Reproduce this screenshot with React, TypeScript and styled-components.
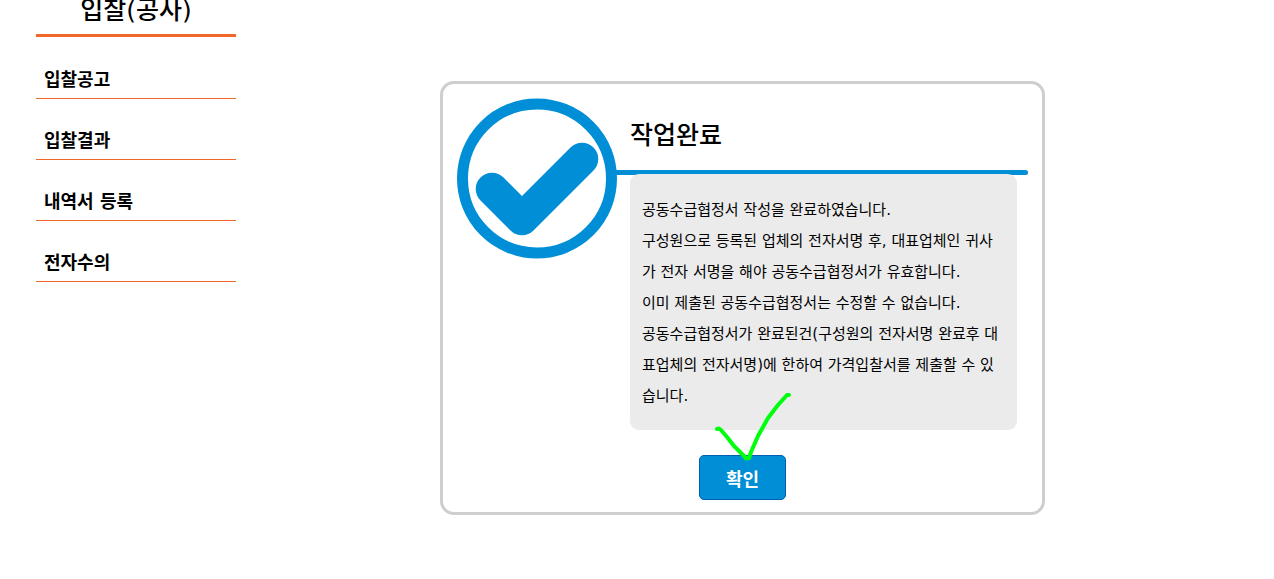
import React from "react";
import styled, { createGlobalStyle } from "styled-components";

const GlobalStyle = createGlobalStyle`
  * { box-sizing: border-box; }
  body {
    margin: 0;
    background: #fff;
    color: #000;
    font-family: "DejaVu Sans", "Noto Sans CJK KR", sans-serif;
  }
`;

const Page = styled.div`
  display: flex;
  align-items: flex-start;
  padding: 0 25px 0 36px;
`;

const Sidebar = styled.aside`
  flex: 0 0 200px;
`;

const SidebarTitle = styled.h1`
  margin: 0 0 1px;
  padding-bottom: 12px;
  border-bottom: 3px solid #f26829;
  font-size: 25px;
  font-weight: 500;
  line-height: 22px;
  text-align: center;
`;

const MenuLink = styled.a`
  display: block;
  padding: 29px 8px 5px;
  border-bottom: 1px solid #f26829;
  color: #000;
  font-size: 18px;
  font-weight: 700;
  line-height: 26px;
  text-decoration: none;
`;

const Main = styled.main`
  flex: 1;
  min-width: 0;
  display: flex;
  justify-content: center;
  padding: 81px 0 64px;
`;

const Card = styled.section`
  width: 100%;
  max-width: 605px;
  padding: 14px 14px 12px;
  border: 3px solid #cecece;
  border-radius: 14px;
`;

const CardBody = styled.div`
  display: flex;
  align-items: flex-start;
`;

const StatusIcon = styled.svg`
  flex: none;
  display: block;
`;

const Content = styled.div`
  flex: 1;
  min-width: 0;
`;

const Heading = styled.h2`
  margin: 0;
  padding: 20px 13px 16px;
  font-size: 25px;
  font-weight: 500;
  line-height: 36px;
`;

const Rule = styled.div`
  height: 5px;
  margin-left: -1px;
  border-radius: 0 3px 3px 0;
  background: #008ed6;
`;

const Message = styled.div`
  position: relative;
  margin: -1px 11px 0 13px;
  padding: 21px 12px 18px;
  border-radius: 9px;
  background: #ebebeb;
  font-size: 15px;
  line-height: 31px;
  word-break: break-all;
`;

const Paragraph = styled.p`
  margin: 0;
`;

const Footer = styled.div`
  display: flex;
  justify-content: center;
  margin-top: 25px;
`;

const ButtonArea = styled.div`
  position: relative;
`;

const ConfirmButton = styled.button`
  display: block;
  width: 87px;
  height: 45px;
  padding: 0;
  border: 1px solid #0060ae;
  border-radius: 5px;
  background: #008ed6;
  color: #fff;
  font-family: inherit;
  font-size: 18px;
  font-weight: 700;
  cursor: pointer;
`;

const PenMark = styled.svg`
  position: absolute;
  left: 13px;
  top: -65px;
  pointer-events: none;
`;

const menu = ["입찰공고", "입찰결과", "내역서 등록", "전자수의"];

const messages = [
  "공동수급협정서 작성을 완료하였습니다.",
  "구성원으로 등록된 업체의 전자서명 후, 대표업체인 귀사가 전자 서명을 해야 공동수급협정서가 유효합니다.",
  "이미 제출된 공동수급협정서는 수정할 수 없습니다.",
  "공동수급협정서가 완료된건(구성원의 전자서명 완료후 대표업체의 전자서명)에 한하여 가격입찰서를 제출할 수 있습니다.",
];

export default function App() {
  return (
    <>
      <GlobalStyle />
      <Page>
        <Sidebar>
          <SidebarTitle>입찰(공사)</SidebarTitle>
          <nav>
            {menu.map((label) => (
              <MenuLink key={label} href="#">
                {label}
              </MenuLink>
            ))}
          </nav>
        </Sidebar>
        <Main>
          <Card>
            <CardBody>
              <StatusIcon width="160" height="161" viewBox="0 0 160 161" fill="none" stroke="#008ed6" aria-hidden="true">
                <circle cx="80" cy="80.5" r="74.5" strokeWidth="11" />
                <path d="M35 91L65 121L125 61" strokeWidth="32.5" strokeLinecap="round" strokeLinejoin="round" />
              </StatusIcon>
              <Content>
                <Heading>작업완료</Heading>
                <Rule />
                <Message>
                  {messages.map((text) => (
                    <Paragraph key={text}>{text}</Paragraph>
                  ))}
                </Message>
              </Content>
            </CardBody>
            <Footer>
              <ButtonArea>
                <ConfirmButton type="button">확인</ConfirmButton>
                <PenMark width="82" height="74" viewBox="0 0 82 74" fill="none" stroke="#00ff0c" strokeWidth="4" strokeLinecap="round" strokeLinejoin="round" aria-hidden="true">
                  <path d="M5 39L7 38.5L9 40L15 47L22 56L32 66L34 68.5L37 68L39 62L46 46L56 28L66 15L75 5L77 5" />
                </PenMark>
              </ButtonArea>
            </Footer>
          </Card>
        </Main>
      </Page>
    </>
  );
}
